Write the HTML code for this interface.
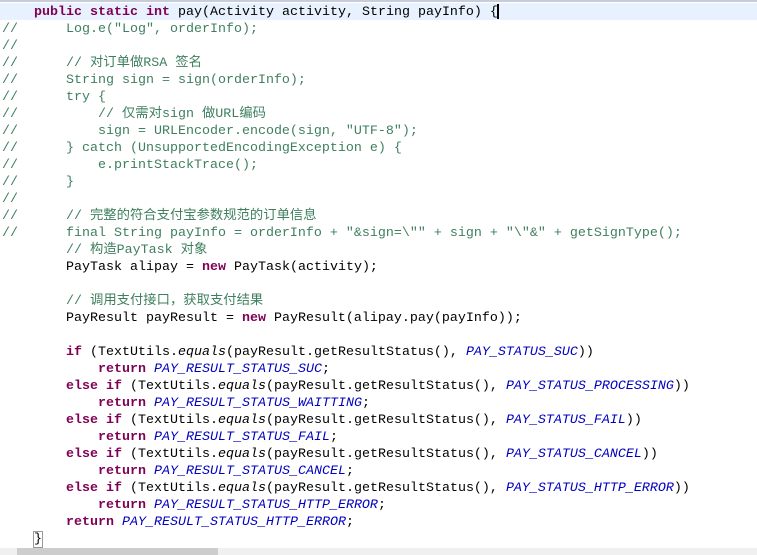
<!DOCTYPE html>
<html><head><meta charset="utf-8"><style>
html,body{margin:0;padding:0;background:#fff;width:757px;height:555px;overflow:hidden}
.top{position:absolute;left:0;top:0;width:757px;height:2px;background:#c8ccd8}
.hl{position:absolute;left:0;top:3px;width:757px;height:17px;background:#e8f2fe}
pre{position:absolute;left:2px;top:4px;margin:0;font-family:"Liberation Mono","Noto Sans CJK SC",monospace;font-size:13.33px;line-height:17px;color:#000;white-space:pre}
.k{color:#7f0055;font-weight:bold}
.c{color:#3f7f5f}
.s{color:#2a00ff}
.f{color:#0000c0;font-style:italic}
i{font-style:italic}
.cur{position:absolute;left:497px;top:4px;width:2px;height:15px;background:#000}
.br{outline:1px solid #999}
.sb{position:absolute;left:0;top:548px;width:757px;height:7px;background:#f0f0f0}
.th{position:absolute;left:17px;top:548px;width:201px;height:7px;background:#cdcdcd}
</style></head><body>
<div class="top"></div><div class="hl"></div>
<pre>    <span class="k">public</span> <span class="k">static</span> <span class="k">int</span> pay(Activity activity, String payInfo) {
<span class="c">//      Log.e("Log", orderInfo);</span>
<span class="c">//</span>
<span class="c">//      // 对订单做RSA 签名</span>
<span class="c">//      String sign = sign(orderInfo);</span>
<span class="c">//      try {</span>
<span class="c">//          // 仅需对sign 做URL编码</span>
<span class="c">//          sign = URLEncoder.encode(sign, "UTF-8");</span>
<span class="c">//      } catch (UnsupportedEncodingException e) {</span>
<span class="c">//          e.printStackTrace();</span>
<span class="c">//      }</span>
<span class="c">//</span>
<span class="c">//      // 完整的符合支付宝参数规范的订单信息</span>
<span class="c">//      final String payInfo = orderInfo + "&amp;sign=\"" + sign + "\"&amp;" + getSignType();</span>
        <span class="c">// 构造PayTask 对象</span>
        PayTask alipay = <span class="k">new</span> PayTask(activity);

        <span class="c">// 调用支付接口，获取支付结果</span>
        PayResult payResult = <span class="k">new</span> PayResult(alipay.pay(payInfo));

        <span class="k">if</span> (TextUtils.<i>equals</i>(payResult.getResultStatus(), <span class="f">PAY_STATUS_SUC</span>))
            <span class="k">return</span> <span class="f">PAY_RESULT_STATUS_SUC</span>;
        <span class="k">else</span> <span class="k">if</span> (TextUtils.<i>equals</i>(payResult.getResultStatus(), <span class="f">PAY_STATUS_PROCESSING</span>))
            <span class="k">return</span> <span class="f">PAY_RESULT_STATUS_WAITTING</span>;
        <span class="k">else</span> <span class="k">if</span> (TextUtils.<i>equals</i>(payResult.getResultStatus(), <span class="f">PAY_STATUS_FAIL</span>))
            <span class="k">return</span> <span class="f">PAY_RESULT_STATUS_FAIL</span>;
        <span class="k">else</span> <span class="k">if</span> (TextUtils.<i>equals</i>(payResult.getResultStatus(), <span class="f">PAY_STATUS_CANCEL</span>))
            <span class="k">return</span> <span class="f">PAY_RESULT_STATUS_CANCEL</span>;
        <span class="k">else</span> <span class="k">if</span> (TextUtils.<i>equals</i>(payResult.getResultStatus(), <span class="f">PAY_STATUS_HTTP_ERROR</span>))
            <span class="k">return</span> <span class="f">PAY_RESULT_STATUS_HTTP_ERROR</span>;
        <span class="k">return</span> <span class="f">PAY_RESULT_STATUS_HTTP_ERROR</span>;
    <span class="br">}</span></pre>
<div class="cur"></div>
<div class="sb"></div><div class="th"></div>
</body></html>
